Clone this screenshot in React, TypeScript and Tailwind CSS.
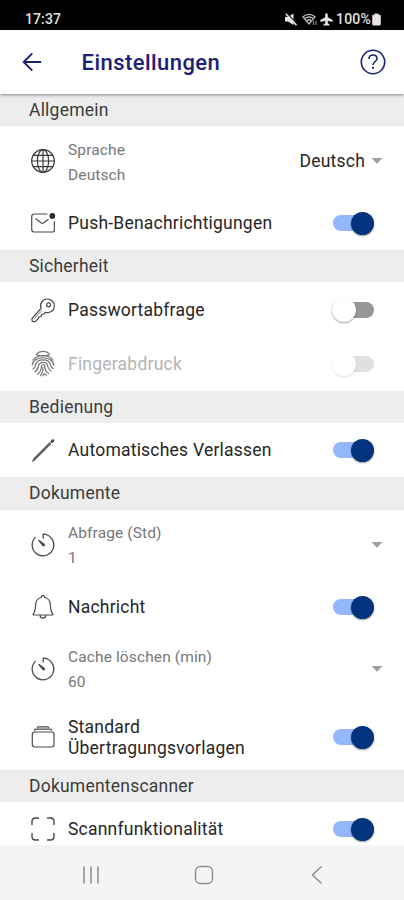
import type { ReactNode } from 'react';

const iconProps = {
  width: 28,
  height: 28,
  viewBox: '0 0 28 28',
  fill: 'none',
  stroke: '#4a4a4a',
  strokeWidth: 1.2,
  strokeLinecap: 'round' as const,
  strokeLinejoin: 'round' as const,
};

const Globe = () => (
  <svg {...iconProps} stroke="#383838">
    <circle cx="14" cy="14" r="11.3" />
    <ellipse cx="14" cy="14" rx="5.6" ry="11.3" />
    <path d="M14 2.7v22.6M2.7 14h22.6M4.5 8.3h19M4.5 19.7h19" />
  </svg>
);

const Mail = () => (
  <svg {...iconProps}>
    <path d="M18 5H5.5Q2.7 5 2.7 7.8V20.2Q2.7 23 5.5 23H23.5Q25.3 23 25.3 21V12.5" />
    <path d="M7 9.7l5.400 4.400q1 .7 2 0l4.800-3.600" />
    <circle cx="23.3" cy="7" r="2.9" fill="#2c2c2c" stroke="none" />
  </svg>
);

const Key = () => (
  <svg {...iconProps}>
    <path d="M12 12.5C10.4 7.5 13.500 3 18.200 3c4 0 7.100 3 7.100 6.900 0 4.600-4.300 7.700-9 6.400l-1.600 1.700-2.200.3-.4 2.200-2.200.4-.4 1.600-3.300 3.100-2.900-.3-.4-2.700z" />
    <circle cx="19.6" cy="8.800" r="2" />
    <path d="M12.800 14.800l-8 8.200" strokeWidth="0.7" />
  </svg>
);

const Fingerprint = () => (
  <svg {...iconProps} stroke="#747474">
    <path d="M8 3.400C11.200.7 16.800.7 20 3.400M7.500 4.600c4.200 1.800 8.800 1.800 13 0M4 10.200C8.500 4.200 19.500 4.200 24 10.200M3.200 15c1.500-9.600 20-9.800 21.600.2M4 19c2.300-.7 2.300-3 2.700-4.500C8 8.200 20 8.200 21.400 14.500c.5 2 .8 3.200 2.600 4" />
    <path d="M5.800 21.800c3.600-1.500 3.300-4.800 4-7 1.200-3.400 7.200-3.300 8.500 0 .8 2.600.7 4.500 3.700 6.200M8.400 24c3.800-2 3.800-5 4-8 .2-2 3-2 3.300 0 .2 3 .6 5.700 3.900 7.500M11.500 25.600c2-2 2.500-5 2.500-8.600M14 25.800l1-2 2.400 1.500" />
  </svg>
);

const Pencil = () => (
  <svg {...iconProps}>
    <path d="M4.700 23.800L21.500 7" strokeWidth="2.500" stroke="#606060" strokeLinecap="butt" />
    <path d="M3.500 25l1.500-1" />
    <path d="M23 5.500l.8-.8" strokeWidth="3" />
  </svg>
);

const Timer = () => (
  <svg {...iconProps} strokeWidth="1.300">
    <path d="M14.200 7V3.200A10.800 10.800 0 1 1 6.300 6.400" />
    <path d="M10 9.500l4 5.200q1.600.4 1.300-1.200z" fill="#444" />
  </svg>
);

const Bell = () => (
  <svg {...iconProps}>
    <path d="M12.300 4.500Q12.300 2.700 14 2.700t1.700 1.800c3.800.8 5.600 3.600 5.700 7.500.1 4.200.5 6.800 2.400 9q.5 1-.7 1H4.900q-1.200 0-.7-1c1.900-2.200 2.300-4.800 2.400-9 .1-3.900 1.900-6.700 5.700-7.500zM11 22.200c.3 4 5.700 4 6 0" />
  </svg>
);

const Stack = () => (
  <svg {...iconProps}>
    <rect x="3.300" y="9" width="21.700" height="15" rx="2.400" />
    <path d="M5.500 7.300Q6 6.200 7.500 6.200h13q1.500 0 2 1.100M8.300 4.500q.3-.6 1.700-.6h8q1.400 0 1.700.6" />
  </svg>
);

const ScanFrame = () => (
  <svg {...iconProps} strokeWidth="1.400">
    <path d="M9.500 3H6.500Q3 3 3 6.500v3M18.500 3h3Q25 3 25 6.500v3M9.500 25h-3Q3 25 3 21.500v-3M18.500 25h3q3.500 0 3.500-3.500v-3" />
  </svg>
);

const Caret = () => (
  <svg width="12" height="6" viewBox="0 0 12 6" className="shrink-0">
    <path d="M.5 0h11L6 5.700z" fill="#a0a0a0" />
  </svg>
);

type SwitchState = 'on' | 'off' | 'disabled';

function Toggle({ state }: { state: SwitchState }) {
  if (state === 'on') {
    return (
      <span className="flex h-4 w-[41px] shrink-0 items-center justify-end rounded-full bg-[#94b7fc]">
        <span className="size-[23px] shrink-0 rounded-full bg-[#02347d] shadow-[0_1px_2px_rgba(0,0,0,0.4)]" />
      </span>
    );
  }
  const off = state === 'off';
  return (
    <span className={`flex h-4 w-[41px] shrink-0 items-center rounded-full ${off ? 'bg-[#979797]' : 'bg-[#e0e0e0]'}`}>
      <span
        className={`-ml-px size-6 shrink-0 rounded-full bg-white ${
          off ? 'shadow-[0_1px_2px_rgba(0,0,0,0.38)]' : 'shadow-[0_1px_2px_rgba(0,0,0,0.14)]'
        }`}
      />
    </span>
  );
}

const Section = ({ title, height = 'h-8' }: { title: string; height?: string }) => (
  <h2 className={`flex shrink-0 items-center bg-[#ededed] pl-[29px] text-[17.5px] tracking-[0.22px] text-[#3c3c3c] ${height}`}>
    {title}
  </h2>
);

function ToggleRow({ icon, label, state = 'on', height = 'h-[54px]' }: {
  icon: ReactNode;
  label: ReactNode;
  state?: SwitchState;
  height?: string;
}) {
  return (
    <div className={`flex shrink-0 items-center pr-[30px] pl-[29px] ${height}`}>
      {icon}
      <span className={`ml-[11px] flex-1 pt-px text-[17.5px] leading-[21px] tracking-[0.22px] ${state === 'disabled' ? 'text-[#b4b4b4]' : 'text-[#262626]'}`}>
        {label}
      </span>
      <Toggle state={state} />
    </div>
  );
}

function SelectRow({ icon, label, value, selected }: {
  icon: ReactNode;
  label: string;
  value: string;
  selected?: string;
}) {
  return (
    <div className="flex h-[70px] shrink-0 items-center pr-[21px] pl-[29px]">
      {icon}
      <div className={`ml-[11px] flex-1 text-[15.5px] leading-[25px] tracking-[0.12px] text-[#777] ${selected ? 'pt-[3px]' : 'pt-px'}`}>
        <div>{label}</div>
        <div>{value}</div>
      </div>
      {selected && <span className="mr-[6px] pt-px text-[17.5px] tracking-[0.22px] text-[#262626]">{selected}</span>}
      <Caret />
    </div>
  );
}

export default function App() {
  return (
    <div className="flex h-[900px] w-[404px] flex-col overflow-hidden bg-white font-['Roboto',sans-serif]">
      <div className="flex h-[30px] shrink-0 items-center bg-black pt-[9px] pr-[22px] pl-[25px] text-[14px] font-medium text-[#e0e0e0]">
        <span className="flex-1 tracking-[0.1px]">17:37</span>
        <svg width="12" height="13" viewBox="0 0 12 13" className="mr-[5px]">
          <path d="M0 4h3L8.500 .5v11.500L3 8.500H0z" fill="#e4e4e4" />
          <path d="M2 .5l10 10.500" stroke="#000" strokeWidth="1.200" />
          <path d="M.8 .8l10.700 11.400" stroke="#e4e4e4" strokeWidth="1.600" />
        </svg>
        <svg width="16" height="13" viewBox="0 0 16 13" className="mr-[2px]" fill="none" stroke="#bdbdbd" strokeWidth="1.300">
          <path d="M1 3.800Q7 -1.200 13 3.800L7 11z" />
          <path d="M2.800 5.500Q7 2.500 11.200 5.500M4.800 7.500Q7 6 9.200 7.500" />
          <path d="M11.500 8v4M14 12V8" stroke="#777" />
        </svg>
        <svg width="13" height="13" viewBox="0 0 13 13" className="mr-[3px]" fill="#e4e4e4">
          <path d="M5.200 1.300q1.300-2 2.600 0v3L12.700 7v1.700L7.800 7.900v2.400l1.700 1.200v1H3.500v-1l1.700-1.200V7.900L.3 8.700V7l4.900-2.700z" />
        </svg>
        <span className="tracking-[0.2px]">100%</span>
        <svg width="11" height="13" viewBox="0 0 11 13">
          <path d="M3.500 .5h4v1.300h1q1.300 0 1.300 1.300v8q0 1.300-1.300 1.300h-6q-1.300 0-1.300-1.300v-8q0-1.300 1.300-1.300h1z" fill="#e4e4e4" />
        </svg>
      </div>

      <header className="z-10 flex h-[64px] shrink-0 items-center bg-white pr-[18px] pl-[22px] text-[#1a2176] shadow-[0_1px_3px_rgba(0,0,0,0.45)]">
        <svg width="20" height="20" viewBox="0 0 20 20" fill="none" stroke="currentColor" strokeWidth="1.900">
          <path d="M19.200 10H2M10.300 1.300L1.700 10l8.600 8.700" />
        </svg>
        <h1 className="ml-[39.500px] flex-1 text-[22px] font-medium tracking-[0.45px]">Einstellungen</h1>
        <svg width="26" height="26" viewBox="0 0 26 26" fill="none" stroke="currentColor" strokeWidth="1.600">
          <circle cx="13" cy="13" r="11.700" />
          <path d="M9 10q0-4 4-4t4 3.700c0 2.700-4 3-4 6.300" />
          <circle cx="13" cy="18.900" r="1.100" fill="currentColor" stroke="none" />
        </svg>
      </header>

      <main className="flex min-h-0 flex-1 flex-col overflow-hidden">
        <Section title="Allgemein" />
        <SelectRow icon={<Globe />} label="Sprache" value="Deutsch" selected="Deutsch" />
        <ToggleRow icon={<Mail />} label="Push-Benachrichtigungen" />
        <Section title="Sicherheit" />
        <ToggleRow icon={<Key />} label="Passwortabfrage" state="off" height="h-[55px]" />
        <ToggleRow icon={<Fingerprint />} label="Fingerabdruck" state="disabled" />
        <Section title="Bedienung" />
        <ToggleRow icon={<Pencil />} label="Automatisches Verlassen" />
        <Section title="Dokumente" height="h-[33px]" />
        <SelectRow icon={<Timer />} label="Abfrage (Std)" value="1" />
        <ToggleRow icon={<Bell />} label="Nachricht" />
        <SelectRow icon={<Timer />} label="Cache löschen (min)" value="60" />
        <ToggleRow icon={<Stack />} label={<>Standard<br />Übertragungsvorlagen</>} height="h-[66px]" />
        <Section title="Dokumentenscanner" />
        <ToggleRow icon={<ScanFrame />} label="Scannfunktionalität" />
      </main>

      <nav className="z-10 flex h-[55px] shrink-0 items-center bg-[#f4f4f4] pt-[5px] pl-[81px]">
        <svg width="20" height="20" viewBox="0 0 20 20" fill="none" stroke="#8c8c8c" strokeWidth="1.500">
          <path d="M3 1.500v17M10 1.500v17M17 1.500v17" />
        </svg>
        <svg width="20" height="20" viewBox="0 0 20 20" fill="none" stroke="#8c8c8c" strokeWidth="1.400" className="ml-[93px]">
          <rect x="1.500" y="1.500" width="17" height="17" rx="4.800" />
        </svg>
        <svg width="12" height="20" viewBox="0 0 12 20" fill="none" stroke="#8c8c8c" strokeWidth="1.500" className="ml-[97px]">
          <path d="M10.500 1.500L1.500 10l9 8.500" />
        </svg>
      </nav>
    </div>
  );
}
